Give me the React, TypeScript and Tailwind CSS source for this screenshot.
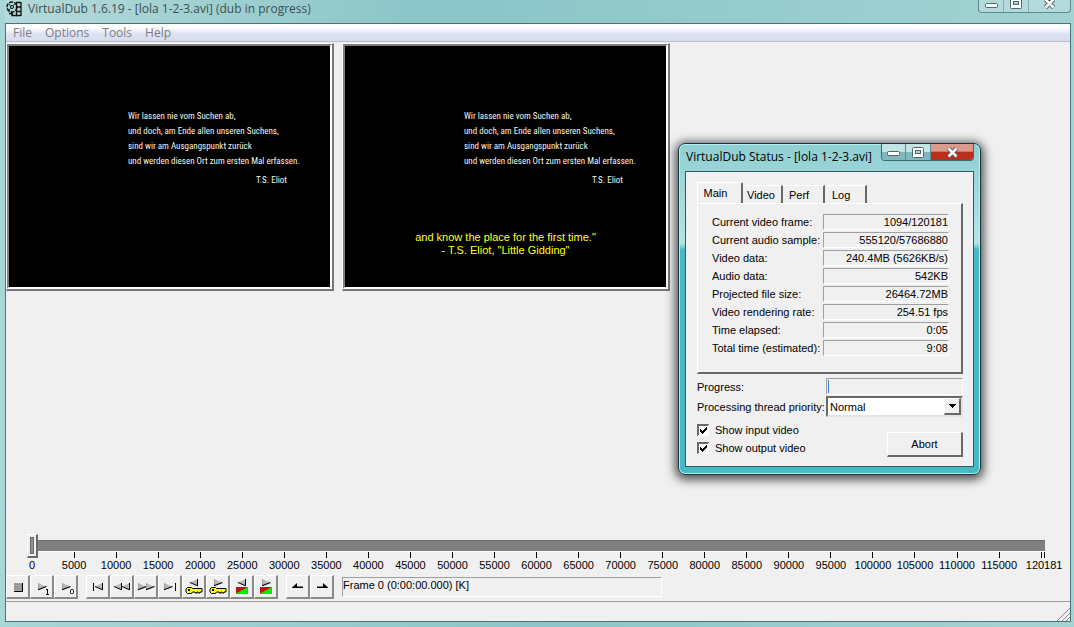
import type { ReactNode } from 'react';
import clsx from 'clsx';

const UI_FONT = "font-['Liberation_Sans',Arial,sans-serif]";
const TITLE_FONT = "font-['Open_Sans','Noto_Sans',sans-serif]";

const menus = ['File', 'Options', 'Tools', 'Help'];

const stats = [
  { label: 'Current video frame:', value: '1094/120181' },
  { label: 'Current audio sample:', value: '555120/57686880' },
  { label: 'Video data:', value: '240.4MB (5626KB/s)' },
  { label: 'Audio data:', value: '542KB' },
  { label: 'Projected file size:', value: '26464.72MB' },
  { label: 'Video rendering rate:', value: '254.51 fps' },
  { label: 'Time elapsed:', value: '0:05' },
  { label: 'Total time (estimated):', value: '9:08' },
];

const LAST_FRAME = 120181;
const ticks = Array.from({ length: 24 }, (_, i) => i * 5000);

const Icon = ({ children }: { children: ReactNode }) => (
  <svg width="18" height="18" viewBox="0 0 18 18" fill="none">
    {children}
  </svg>
);

// grey arrows with a black lower edge, used by most of the transport buttons
const Right = ({ x, y }: { x: number; y: number }) => (
  <g transform={`translate(${x} ${y})`}>
    <path d="M0 0L8 3.500L0 7z" fill="#b8b8b8" />
    <path d="M0.500 0v6" stroke="#a0a0a0" />
    <path d="M0 6.800L8.500 3.500" stroke="#000" strokeWidth="1.200" />
  </g>
);

const Left = ({ x, y }: { x: number; y: number }) => (
  <g transform={`translate(${x} ${y})`}>
    <path d="M8 0L0 3.500L8 7z" fill="#b8b8b8" />
    <path d="M0 3.500L7.500 6.800V0" stroke="#000" />
  </g>
);

const KeyShape = () => (
  <>
    <path d="M2.500 9.500h4l1 1h9.500v3.500h-2v1h-2v-1h-1v1h-2v-1h-2.500l-1 1.500h-4l-1.500-1.500v-3z" fill="#ff0" stroke="#000" />
    <path d="M3 11h2v2H3z" fill="#000" />
  </>
);

const SceneShape = () => (
  <>
    <path d="M3 9h12v7H3z" fill="#0e0" />
    <path d="M3 9h12L3 15.500z" fill="#e01818" />
    <g shapeRendering="crispEdges" stroke="#8c1010" strokeDasharray="1 1">
      <path d="M3 9.500h10M4 10.500h8M3 11.500h7M4 12.500h4M3 13.500h3" />
    </g>
  </>
);

const transport = [
  [
    {
      name: 'Stop',
      icon: (
        <g shapeRendering="crispEdges">
          <path d="M5 5h9v9H5z" fill="#000" />
          <path d="M5 5h8v8H5z" fill="#a0a0a0" />
          <path d="M6 6.500h7M6 8.500h7M6 10.500h7" stroke="#888" strokeDasharray="1 1" />
        </g>
      ),
    },
    {
      name: 'Play input',
      icon: (
        <>
          <Right x={5} y={5} />
          <path d="M13 11.500h2M14.500 11v5M13 16.500h3" stroke="#000" shapeRendering="crispEdges" />
        </>
      ),
    },
    {
      name: 'Play output',
      icon: (
        <>
          <Right x={5} y={5} />
          <rect x="13.500" y="11.500" width="3" height="4" rx="1" stroke="#000" />
        </>
      ),
    },
  ],
  [
    {
      name: 'Start',
      icon: (
        <>
          <path d="M4.500 5v8" stroke="#000" />
          <Left x={6} y={5} />
        </>
      ),
    },
    {
      name: 'Backward',
      icon: (
        <>
          <Left x={1} y={5} />
          <Left x={9} y={5} />
        </>
      ),
    },
    {
      name: 'Forward',
      icon: (
        <>
          <Right x={1} y={5} />
          <Right x={9} y={5} />
        </>
      ),
    },
    {
      name: 'End',
      icon: (
        <>
          <Right x={3} y={5} />
          <path d="M14.500 5v8" stroke="#000" />
        </>
      ),
    },
    {
      name: 'Previous key frame',
      icon: (
        <>
          <Left x={5} y={1} />
          <KeyShape />
        </>
      ),
    },
    {
      name: 'Next key frame',
      icon: (
        <>
          <Right x={5} y={1} />
          <KeyShape />
        </>
      ),
    },
    {
      name: 'Previous scene',
      icon: (
        <>
          <Left x={5} y={1} />
          <SceneShape />
        </>
      ),
    },
    {
      name: 'Next scene',
      icon: (
        <>
          <Right x={5} y={1} />
          <SceneShape />
        </>
      ),
    },
  ],
  [
    { name: 'Mark in', icon: <path d="M3 9.500L8 5V8.500H14V10H3z" fill="#000" /> },
    { name: 'Mark out', icon: <path d="M15 9.500L10 5V8.500H4V10H15z" fill="#000" /> },
  ],
];

const AppIcon = () => (
  <svg width="16" height="16" viewBox="0 0 16 16" fill="none" stroke="#111" aria-hidden="true">
    <circle cx="6" cy="6" r="5" strokeWidth="1.500" strokeDasharray="4 1" />
    <circle cx="6" cy="6" r="1.500" />
    <path d="M3 3.500l1.500 1M8.500 3L7.500 4.500M3 9l1.500-1.500" />
    <path d="M3 12.500h4M6 11v3.500h5" strokeWidth="1.500" />
    <path d="M10.500 1v14M15 1v14M10 1.500h5M10 6h5M10 10.500h5M10 14.500h5" strokeWidth="1.300" />
  </svg>
);

const MinGlyph = () => (
  <svg width="13" height="6" viewBox="0 0 13 6" aria-hidden="true">
    <rect x="0.500" y="0.500" width="12" height="4" rx="1" fill="#fff" stroke="#52676c" />
  </svg>
);

const MaxGlyph = () => (
  <svg width="12" height="11" viewBox="0 0 12 11" aria-hidden="true">
    <rect x="0.500" y="0.500" width="11" height="10" rx="1" fill="#fff" stroke="#52676c" />
    <rect x="3.500" y="3.500" width="5" height="3" fill="#a9d3d6" stroke="#52676c" />
  </svg>
);

const CloseGlyph = () => (
  <svg width="13" height="11" viewBox="0 0 13 11" aria-hidden="true">
    <path d="M2.500 1.500L10.500 9.500M10.500 1.500L2.500 9.500" stroke="#4a5860" strokeWidth="4.500" />
    <path d="M2.500 1.500L10.500 9.500M10.500 1.500L2.500 9.500" stroke="#fff" strokeWidth="2.500" />
  </svg>
);

const VideoPane = ({ subtitle }: { subtitle?: boolean }) => (
  <div className="border-t border-l border-r-2 border-b-2 border-t-white border-l-white border-r-[#77777b] border-b-[#77777b]">
    <div className="flex h-[245px] w-[325px] flex-col border-t-2 border-l-2 border-r-2 border-b-2 border-t-[#808080] border-l-[#808080] border-r-white border-b-white bg-black pt-[63px]">
      <div className="ml-[119px] w-[159px] whitespace-nowrap font-['Roboto_Condensed','Open_Sans_Condensed','Liberation_Sans_Narrow',sans-serif] text-[9px] leading-[15px] text-[#f4f4e8]">
        <p>Wir lassen nie vom Suchen ab,</p>
        <p>und doch, am Ende allen unseren Suchens,</p>
        <p>sind wir am Ausgangspunkt zurück</p>
        <p>und werden diesen Ort zum ersten Mal erfassen.</p>
        <p className="mt-1 text-right">T.S. Eliot</p>
      </div>
      {subtitle && (
        <p className="mt-[43px] text-center text-[11px] leading-[13px] text-[#ffff20]">
          and know the place for the first time."
          <br />- T.S. Eliot, "Little Gidding"
        </p>
      )}
    </div>
  </div>
);

const StatusDialog = () => (
  <section
    aria-label="VirtualDub Status"
    className="absolute top-[143px] left-[678px] w-[303px] rounded-[7px] border border-[#16383c] bg-linear-to-b from-[#8fcfd2] from-0% via-[#b5e4e4] via-30% to-[#45b9c4] to-32% px-[6px] pb-[7px] shadow-[0_2px_10px_3px_rgba(0,0,0,0.65),inset_0_0_0_1px_#b9eef0]"
  >
    <header className="flex h-[27px] items-start justify-between pl-px">
      <h2 className={clsx(TITLE_FONT, 'pt-1 text-xs leading-[18px] whitespace-nowrap text-black')}>
        VirtualDub Status - [lola 1-2-3.avi]
      </h2>
      <div className="flex h-[17px] overflow-hidden rounded-b-[4px] border border-t-0 border-[#3f6a70]">
        <button aria-label="Minimize" className="flex w-[24px] items-center justify-center border-r border-[#5d8d92] bg-linear-to-b from-[#c5e4e5] from-50% to-[#7fb9bd] to-50% pt-1">
          <MinGlyph />
        </button>
        <button aria-label="Maximize" className="flex w-[25px] items-center justify-center border-r border-[#5d8d92] bg-linear-to-b from-[#c5e4e5] from-50% to-[#7fb9bd] to-50%">
          <MaxGlyph />
        </button>
        <button aria-label="Close" className="flex w-[42px] items-center justify-center bg-linear-to-b from-[#dc9a8c] from-45% to-[#b8301c] to-50%">
          <CloseGlyph />
        </button>
      </div>
    </header>

    <div className="border border-[#2d5b60] bg-[#f0f0f0] pt-[10px] pr-[10px] pb-[9px] pl-[11px]">
      <div role="tablist" className="flex items-end">
        <button role="tab" aria-selected="true" className="h-[21px] w-[46px] rounded-t-[2px] border-t border-r-2 border-l border-t-white border-r-[#696969] border-l-white pr-2 pb-px text-center">
          Main
        </button>
        <button role="tab" aria-selected="false" className="h-[18px] w-[40px] border-t border-r-2 border-t-white border-r-[#696969] pl-1 text-left">
          Video
        </button>
        <button role="tab" aria-selected="false" className="h-[18px] w-[42px] border-t border-r-2 border-t-white border-r-[#696969] pl-[6px] text-left">
          Perf
        </button>
        <button role="tab" aria-selected="false" className="h-[18px] w-[42px] border-t border-r-2 border-t-white border-r-[#696969] pl-[7px] text-left">
          Log
        </button>
      </div>

      <dl className="h-[171px] border-t border-r-2 border-b-2 border-l border-t-white border-r-[#696969] border-b-[#696969] border-l-white pt-[9px] pr-[12px] pl-[14px]">
        {stats.map((s) => (
          <div key={s.label} className="flex h-[18px] items-center justify-between whitespace-nowrap">
            <dt>{s.label}</dt>
            <dd className="h-4 w-[126px] border border-t-[#a0a0a0] border-r-white border-b-white border-l-[#a0a0a0] text-right leading-[15px]">
              {s.value}
            </dd>
          </div>
        ))}
      </dl>

      <div className="mt-1 flex items-center justify-between">
        <span id="progress-label">Progress:</span>
        <div
          role="progressbar"
          aria-labelledby="progress-label"
          aria-valuenow={1}
          className="h-[17px] w-[137px] border border-t-[#a0a0a0] border-r-white border-b-white border-l-[#a0a0a0] p-px"
        >
          <div className="h-full w-px bg-[#3a7bd5]" />
        </div>
      </div>

      <div className="mt-px flex items-center justify-between">
        <label htmlFor="priority" className="whitespace-nowrap">Processing thread priority:</label>
        <div className="relative w-[137px]">
          <select
            id="priority"
            defaultValue="Normal"
            className="block h-[21px] w-full appearance-none border-2 border-t-[#696969] border-r-[#e3e3e3] border-b-[#e3e3e3] border-l-[#696969] bg-white pl-[2px]"
          >
            <option>Normal</option>
          </select>
          <span className="pointer-events-none absolute top-[2px] right-[2px] flex h-[17px] w-[17px] items-center justify-center border-t border-r-2 border-b-2 border-l border-t-white border-r-[#696969] border-b-[#696969] border-l-white bg-[#f0f0f0]">
            <svg width="7" height="4" viewBox="0 0 7 4" shapeRendering="crispEdges" aria-hidden="true">
              <path d="M0 0h7L3.500 4z" />
            </svg>
          </span>
        </div>
      </div>

      <div className="mt-1 flex items-end justify-between">
        <div>
          <Check label="Show input video" id="show-input" />
          <Check label="Show output video" id="show-output" />
        </div>
        <button className="h-[25px] w-[76px] border-t border-r-2 border-b-2 border-l border-t-white border-r-[#696969] border-b-[#696969] border-l-white">
          Abort
        </button>
      </div>
    </div>
  </section>
);

const Check = ({ label, id }: { label: string; id: string }) => (
  <div className="flex h-[18px] items-center gap-[6px]">
    <span className="relative h-3 w-3">
      <input
        id={id}
        type="checkbox"
        defaultChecked
        className="peer block h-3 w-3 appearance-none border-t-2 border-r border-b border-l-2 border-t-[#696969] border-r-white border-b-white border-l-[#696969] bg-white"
      />
      <svg
        width="7"
        height="7"
        viewBox="0 0 7 7"
        shapeRendering="crispEdges"
        className="pointer-events-none absolute top-[3px] left-[3px] hidden peer-checked:block"
        aria-hidden="true"
      >
        <path d="M0 2h1v1h1v1h1V3h1V2h1V1h1V0h1v3H6v1H5v1H4v1H3v1H2V6H1V5H0z" />
      </svg>
    </span>
    <label htmlFor={id}>{label}</label>
  </div>
);

const App = () => {
  return (
    <div className={clsx(UI_FONT, 'relative flex min-h-screen flex-col overflow-hidden bg-linear-to-r from-[#a9d6d6] via-[#8cc5c8] to-[#a5d3d3] pr-[3px] pb-[5px] pl-[5px] text-[11px] leading-[14px] text-black')}>
      <header className="flex h-[23px] items-start justify-between bg-linear-to-r from-[#b4dada] via-[#8ac5c8] via-40% to-[#a2d2d2]">
        <div className="flex items-center gap-[6px] pl-px">
          <AppIcon />
          <h1 className={clsx(TITLE_FONT, 'text-xs leading-[18px] whitespace-nowrap text-[#3c5054]')}>
            VirtualDub 1.6.19 - [lola 1-2-3.avi] (dub in progress)
          </h1>
        </div>
        <div className="flex h-[13px] rounded-b-[4px] border border-t-0 border-[#5f8b8f] bg-[#b3dada]">
          <button aria-label="Minimize" className="flex w-[25px] items-end justify-center border-r border-[#83adb0] pb-[3px]">
            <MinGlyph />
          </button>
          <button aria-label="Maximize" className="flex w-[25px] items-end justify-center border-r border-[#83adb0] pb-[3px]">
            <MaxGlyph />
          </button>
          <button aria-label="Close" className="flex w-[41px] items-end justify-center pb-[3px]">
            <CloseGlyph />
          </button>
        </div>
      </header>

      <main className="flex flex-1 flex-col border border-[#4b7377] bg-[#f0f0f0]">
        <nav className={clsx(TITLE_FONT, 'flex h-[18px] items-center gap-[13px] border-b border-[#b9bdcb] bg-linear-to-b from-white from-20% via-[#dde2f2] via-60% to-[#d8dcef] pl-[7px] text-xs text-[#7d7d82]')}>
          {menus.map((m) => (
            <button key={m}>{m}</button>
          ))}
        </nav>

        <div className="flex flex-1 items-start gap-[8px] pt-px">
          <VideoPane />
          <VideoPane subtitle />
        </div>

        <div className="pr-[25px] pl-[21px]">
          <input
            type="range"
            aria-label="Position"
            min={0}
            max={LAST_FRAME}
            defaultValue={0}
            className="relative block h-[14px] w-full appearance-none bg-transparent [&::-webkit-slider-runnable-track]:h-[11px] [&::-webkit-slider-runnable-track]:bg-[linear-gradient(#696969_1px,#808080_1px)] [&::-webkit-slider-runnable-track]:shadow-[0_1px_0_#fff] [&::-webkit-slider-thumb]:-mt-[6px] [&::-webkit-slider-thumb]:h-[24px] [&::-webkit-slider-thumb]:w-[11px] [&::-webkit-slider-thumb]:appearance-none [&::-webkit-slider-thumb]:border-t [&::-webkit-slider-thumb]:border-r-2 [&::-webkit-slider-thumb]:border-b-2 [&::-webkit-slider-thumb]:border-l [&::-webkit-slider-thumb]:border-t-white [&::-webkit-slider-thumb]:border-r-[#696969] [&::-webkit-slider-thumb]:border-b-[#696969] [&::-webkit-slider-thumb]:border-l-white [&::-webkit-slider-thumb]:bg-[#909090] [&::-webkit-slider-thumb]:shadow-[inset_0_0_0_2px_#f0f0f0,inset_0_0_0_3px_#696969]"
          />
        </div>
        <div className="flex pr-[26px] pl-[26px]">
          {ticks.map((t) => (
            <Tick key={t} value={t} className="flex-1" />
          ))}
          <div className="h-[6px] w-[3px] border-l border-black" />
          <Tick value={LAST_FRAME} className="w-0" />
        </div>

        <div className="mt-[3px] flex items-start gap-[8px]">
          {transport.map((group, i) => (
            <div key={i} className="flex">
              {group.map((b) => (
                <button
                  key={b.name}
                  aria-label={b.name}
                  className="flex h-6 w-6 items-center justify-center border-t border-r-2 border-b-2 border-l border-t-white border-r-[#8a8a8a] border-b-[#8a8a8a] border-l-white"
                >
                  <Icon>{b.icon}</Icon>
                </button>
              ))}
            </div>
          ))}
          <output className="mt-[2px] h-5 w-[320px] border border-t-[#a0a0a0] border-r-white border-b-white border-l-[#a0a0a0]">
            Frame 0 (0:00:00.000) [K]
          </output>
        </div>

        <footer className="mt-[2px] flex h-5 items-end justify-end border-t border-[#a0a0a0]">
          <svg width="13" height="13" viewBox="0 0 13 13" stroke="#8c8c94" aria-hidden="true">
            <path d="M0 13L13 0M5 13L13 5M9 13L13 9" />
          </svg>
        </footer>
      </main>

      <StatusDialog />
    </div>
  );
};

const Tick = ({ value, className }: { value: number; className: string }) => (
  <div className={className}>
    <div className="flex w-0 flex-col items-center">
      <div className="h-[6px] w-px bg-black" />
      <span>{value}</span>
    </div>
  </div>
);

export default App;
